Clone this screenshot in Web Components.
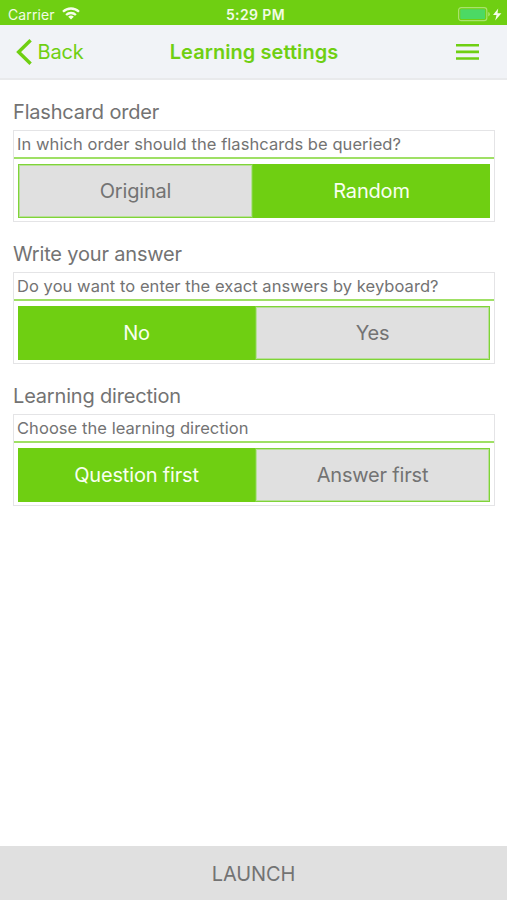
<!DOCTYPE html>
<html lang="en">
<head>
<meta charset="utf-8">
<title>Learning settings</title>
<style>
	body {
		margin: 0;
		background: #fff;
		font-family: Inter, "Liberation Sans", sans-serif;
		color: #737373;
		--green: #6fcf12;
		--grey: #e0e0e0;
	}
</style>
</head>
<body>
<learning-app>
	<status-bar slot="top" carrier="Carrier" time="5:29 PM"></status-bar>
	<nav-bar slot="top" back="Back">Learning settings</nav-bar>
	<setting-group heading="Flashcard order" hint="In which order should the flashcards be queried?">
		<choice-button>Original</choice-button>
		<choice-button selected>Random</choice-button>
	</setting-group>
	<setting-group heading="Write your answer" hint="Do you want to enter the exact answers by keyboard?">
		<choice-button selected>No</choice-button>
		<choice-button>Yes</choice-button>
	</setting-group>
	<setting-group heading="Learning direction" hint="Choose the learning direction">
		<choice-button selected>Question first</choice-button>
		<choice-button>Answer first</choice-button>
	</setting-group>
	<launch-button slot="bottom">LAUNCH</launch-button>
</learning-app>
<script>
class LearningApp extends HTMLElement {
	constructor() {
		super();
		this.attachShadow({ mode: 'open' });
		this.shadowRoot.innerHTML = `
            <style>
                :host {
                    display: flex;
                    flex-direction: column;
                    height: 100vh;
                }
                main {
                    flex: 1;
                    padding: 0 12px 0 13px;
                }
            </style>
            <slot name="top"></slot>
            <main><slot></slot></main>
            <slot name="bottom"></slot>
        `;
	}
}

class StatusBar extends HTMLElement {
	constructor() {
		super();
		this.attachShadow({ mode: 'open' });
		this.shadowRoot.innerHTML = `
            <style>
                :host {
                    display: grid;
                    grid-template-columns: 1fr auto 1fr;
                    align-items: center;
                    height: 25px;
                    padding: 0 4px 0 8px;
                    box-sizing: border-box;
                    background: var(--green);
                    color: #f2fbe6;
                    font-size: 14px;
                    line-height: 25px;
                }
                .left {
                    display: flex;
                    align-items: center;
                    gap: 7px;
                }
                .left span, .time {
                    padding-top: 2px;
                }
                .left span {
                    letter-spacing: 0.1px;
                }
                .time {
                    font-weight: 600;
                    letter-spacing: 0.4px;
                }
                .right {
                    display: flex;
                    justify-content: flex-end;
                    align-items: center;
                }
                svg {
                    display: block;
                }
            </style>
            <div class="left">
                <span id="carrier"></span>
                <svg width="18" height="13" viewBox="0 0 18 13" fill="none" stroke="#f6fdec" stroke-width="2.3">
                    <path d="M1 4.8a11.4 11.4 0 0 1 16 0"/>
                    <path d="M4.1 8a7 7 0 0 1 9.8 0"/>
                    <path d="M9 12.6L6.2 9.8a4 4 0 0 1 5.6 0z" fill="#f6fdec" stroke="none"/>
                </svg>
            </div>
            <div class="time" id="time"></div>
            <div class="right">
                <svg width="46" height="16" viewBox="0 0 46 16">
                    <rect x="1.6" y="1.6" width="28.2" height="13" rx="2.6" fill="none" stroke="#a9e26e" stroke-width="1.2"/>
                    <rect x="3.3" y="3.3" width="24.8" height="9.6" rx="1" fill="#4cd964"/>
                    <path d="M31.2 6v4.4q1.700-.6 1.700-2.200t-1.700-2.200z" fill="#a9e26e"/>
                    <path d="M41.200 2.600L36 9h3.500l-1.300 5.400L44.400 7.300h-3.900z" fill="#f6fdec"/>
                </svg>
            </div>
        `;
		this.shadowRoot.querySelector('#carrier').textContent = this.getAttribute('carrier');
		this.shadowRoot.querySelector('#time').textContent = this.getAttribute('time');
	}
}

class NavBar extends HTMLElement {
	constructor() {
		super();
		this.attachShadow({ mode: 'open' });
		this.shadowRoot.innerHTML = `
            <style>
                :host {
                    display: grid;
                    grid-template-columns: 1fr auto 1fr;
                    align-items: center;
                    height: 55px;
                    padding: 0 28px 0 29px;
                    box-sizing: border-box;
                    background: #f1f3f7;
                    border-bottom: 2px solid #e9eaec;
                    color: var(--green);
                    font-size: 20px;
                }
                .back {
                    display: flex;
                    align-items: center;
                    gap: 5px;
                    margin-left: -13px;
                    letter-spacing: -0.2px;
                }
                .back span {
                    padding: 1px 0 0 0.5px;
                }
                .title {
                    padding-top: 1px;
                    font-weight: 600;
                    letter-spacing: 0.07px;
                }
                .menu {
                    justify-self: end;
                }
                svg {
                    display: block;
                }
            </style>
            <div class="back">
                <svg width="16" height="26" viewBox="0 0 16 26" fill="none" stroke="#6fcf12" stroke-width="3.4">
                    <path d="M14.600 1.300L2.600 13l12 11.700"/>
                </svg>
                <span id="back"></span>
            </div>
            <div class="title"><slot></slot></div>
            <svg class="menu" width="23" height="16" viewBox="0 0 23 16" fill="#6fcf12">
                <path d="M0 0h23v2.600H0zM0 6.600h23v2.600H0zM0 13.200h23v2.600H0z"/>
            </svg>
        `;
		this.shadowRoot.querySelector('#back').textContent = this.getAttribute('back');
	}
}

class SettingGroup extends HTMLElement {
	constructor() {
		super();
		this.attachShadow({ mode: 'open' });
		this.shadowRoot.innerHTML = `
            <style>
                :host {
                    display: block;
                }
                h2 {
                    margin: 0;
                    height: 50px;
                    padding-top: 12px;
                    box-sizing: border-box;
                    font-size: 20px;
                    font-weight: 400;
                    letter-spacing: -0.18px;
                    line-height: 40px;
                    white-space: nowrap;
                }
                .box {
                    height: 92px;
                    box-sizing: border-box;
                    border: 1px solid #e4e4e6;
                }
                p {
                    margin: 0;
                    height: 28px;
                    padding-left: 3px;
                    box-sizing: border-box;
                    border-bottom: 2px solid #9fe065;
                    font-size: 16.5px;
                    letter-spacing: 0.06px;
                    line-height: 26px;
                    white-space: nowrap;
                }
                .choices {
                    display: flex;
                    margin: 5px 4px 0;
                    height: 54px;
                }
            </style>
            <h2></h2>
            <div class="box">
                <p></p>
                <div class="choices"><slot></slot></div>
            </div>
        `;
		this.shadowRoot.querySelector('h2').textContent = this.getAttribute('heading');
		this.shadowRoot.querySelector('p').textContent = this.getAttribute('hint');
	}
}

class ChoiceButton extends HTMLElement {
	constructor() {
		super();
		this.attachShadow({ mode: 'open' });
		this.shadowRoot.innerHTML = `
            <style>
                :host {
                    flex: 1 1 0;
                    display: flex;
                    align-items: center;
                    justify-content: center;
                    box-sizing: border-box;
                    background: var(--grey);
                    box-shadow: inset 0 0 0 1px #7fd438, inset 0 0 0 2px #b9df9a;
                    font-size: 20px;
                    letter-spacing: -0.18px;
                }
                :host([selected]) {
                    flex-basis: 2px;
                    background: var(--green);
                    box-shadow: none;
                    color: #f8fff0;
                }
            </style>
            <span><slot></slot></span>
        `;
	}
}

class LaunchButton extends HTMLElement {
	constructor() {
		super();
		this.attachShadow({ mode: 'open' });
		this.shadowRoot.innerHTML = `
            <style>
                :host {
                    display: flex;
                    align-items: center;
                    justify-content: center;
                    height: 54px;
                    padding-top: 1px;
                    box-sizing: border-box;
                    background: var(--grey);
                    font-size: 20px;
                    letter-spacing: -0.1px;
                }
            </style>
            <span><slot></slot></span>
        `;
	}
}

customElements.define('learning-app', LearningApp);
customElements.define('status-bar', StatusBar);
customElements.define('nav-bar', NavBar);
customElements.define('setting-group', SettingGroup);
customElements.define('choice-button', ChoiceButton);
customElements.define('launch-button', LaunchButton);
</script>
</body>
</html>
